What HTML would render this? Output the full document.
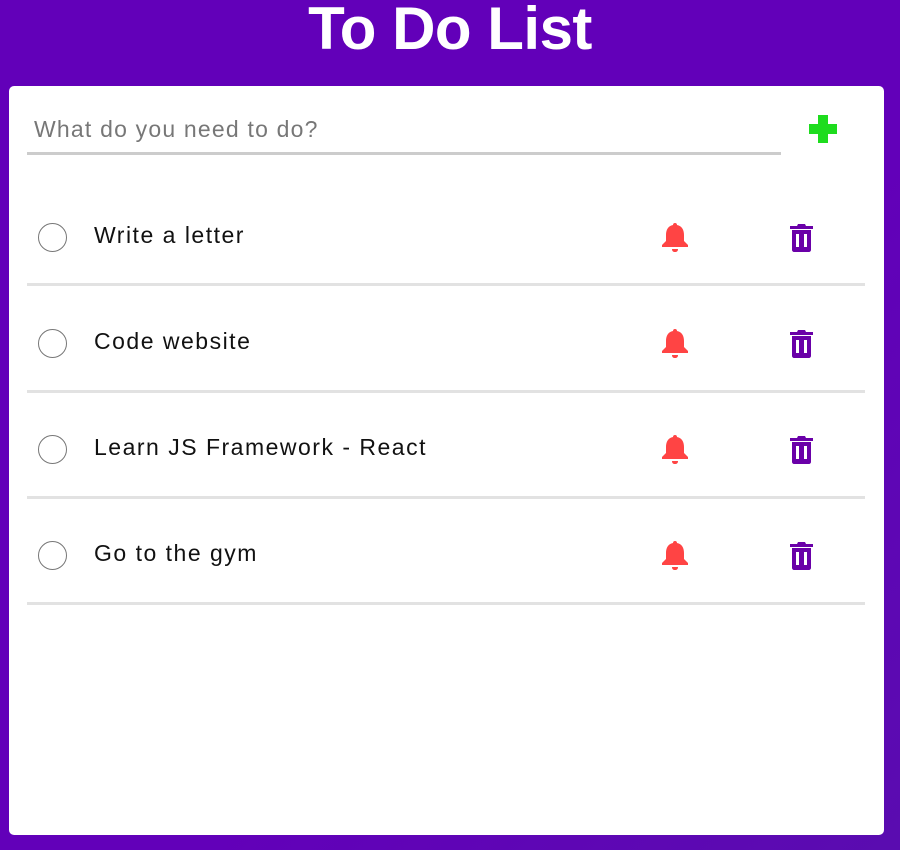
<!DOCTYPE html>
<html><head><meta charset="utf-8"><style>
*{margin:0;padding:0;box-sizing:border-box}
body{width:900px;height:850px;background:linear-gradient(135deg,#6200b9 60%,#5a0cb0);font-family:"Liberation Sans",sans-serif;position:relative;overflow:hidden}
h1{position:absolute;top:-6px;left:0;width:900px;text-align:center;color:#fff;font-size:60px;font-weight:bold;letter-spacing:-0.5px}
.card{position:absolute;left:9px;top:86px;width:875px;height:749px;background:#fff;border-radius:5px}
.inp{position:absolute;left:18px;top:28px;width:754px;height:41px;border-bottom:3px solid #ccc;color:#777;font-size:23px;padding-left:7px;line-height:30px;letter-spacing:1.2px}
.plus{position:absolute;left:800px;top:29px}
.row{position:absolute;left:18px;width:838px;border-bottom:3px solid #e2e2e2}
.c{position:absolute;left:38px;width:29px;height:29px;border:1.5px solid #777;border-radius:50%}
.t{position:absolute;left:94px;font-size:23px;color:#111;white-space:nowrap;letter-spacing:1.5px}
</style></head><body>
<h1>To Do List</h1>
<div class="card">
<div class="inp">What do you need to do?</div>
<svg class="plus" width="28" height="28" viewBox="0 0 28 28"><path d="M9 0h10v9h9v10h-9v9H9v-9H0V9h9z" fill="#1edc1e"/></svg>
<div class="row" style="top:94px;height:106px"></div>
<div class="row" style="top:200px;height:107px"></div>
<div class="row" style="top:307px;height:106px"></div>
<div class="row" style="top:413px;height:106px"></div>
</div>
<div class="c" style="top:223px"></div><div class="t" style="top:222px">Write a letter</div>
<div class="c" style="top:329px"></div><div class="t" style="top:328px">Code website</div>
<div class="c" style="top:435px"></div><div class="t" style="top:434px">Learn JS Framework - React</div>
<div class="c" style="top:541px"></div><div class="t" style="top:540px">Go to the gym</div>
<svg width="900" height="850" style="position:absolute;left:0;top:0">
<defs>
<g id="bell"><path d="M13 0c1.5 0 2 1 2 2 5 1 7 5 7 10v6l4 4v2H0v-2l4-4v-6c0-5 2-9 7-10 0-1 .5-2 2-2z M10 26h6c0 2-1 3-3 3s-3-1-3-3z" fill="#ff4444"/></g>
<g id="trash"><path d="M1 3h7l1-2h7l1 2h7v3H1z" fill="#6a00a8"/><path d="M3 7h19v20c0 1-1 2-2 2H5c-1 0-2-1-2-2z M7 11v13h3V11z M15 11v13h3V11z" fill="#6a00a8" fill-rule="evenodd"/></g>
</defs>
<use href="#bell" x="662" y="223"/><use href="#trash" x="789" y="223"/>
<use href="#bell" x="662" y="329"/><use href="#trash" x="789" y="329"/>
<use href="#bell" x="662" y="435"/><use href="#trash" x="789" y="435"/>
<use href="#bell" x="662" y="541"/><use href="#trash" x="789" y="541"/>
</svg>
</body></html>
